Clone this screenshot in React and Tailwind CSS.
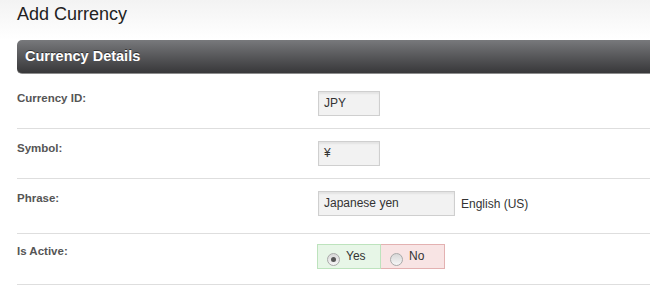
import React from 'react';

const Row = ({ label, children, className }) => (
  <div className={`flex border-b border-[#dedede] ${className}`}>
    <div className="w-[301px] shrink-0 text-[11.5px] font-bold leading-[14px] text-[#555]">
      {label}
    </div>
    <div className="flex items-center">{children}</div>
  </div>
);

const TextBox = ({ value, width }) => (
  <div
    className={`h-[25px] ${width} border border-[#cfcfcf] bg-[#f2f2f2] px-[5px] text-[12px] leading-[23px] text-[#333] shadow-[inset_0_2px_2px_rgba(0,0,0,0.06)]`}
  >
    {value}
  </div>
);

const Radio = ({ checked }) => (
  <span className="relative inline-block h-[13px] w-[13px] rounded-full border border-[#a9a9a9] bg-gradient-to-b from-[#d8d8d8] to-[#f6f6f6]">
    {checked && (
      <span className="absolute left-[3px] top-[3px] h-[5px] w-[5px] rounded-full bg-[#555]" />
    )}
  </span>
);

export default function App() {
  return (
    <div className="min-h-[294px] overflow-hidden bg-white font-['Liberation_Sans',Arial,sans-serif]">
      <div className="h-[40px] bg-gradient-to-b from-[#f3f3f3] to-white pl-[17px] pt-[3px]">
        <h1 className="text-[18px] leading-[22px] text-[#222]">Add Currency</h1>
      </div>

      <div className="pl-[17px]">
        <div className="h-[34px] rounded-l-[5px] border-b border-[#8c8c8c] bg-gradient-to-b from-[#78797c] to-[#38383a] pl-[8px] text-[14.5px] font-bold leading-[33px] text-white [text-shadow:0_-1px_0_rgba(0,0,0,0.5)]">
          Currency Details
        </div>

        <Row label="Currency ID:" className="pt-[17px] pb-[12px]">
          <TextBox value="JPY" width="w-[62px]" />
        </Row>

        <Row label="Symbol:" className="pt-[12px] pb-[12px]">
          <TextBox value="¥" width="w-[62px]" />
        </Row>

        <Row label="Phrase:" className="pt-[12px] pb-[17px]">
          <TextBox value="Japanese yen" width="w-[137px]" />
          <span className="ml-[6px] text-[12px] text-[#333]">English (US)</span>
        </Row>

        <Row label="Is Active:" className="pt-[10px] pb-[15px]">
          <div className="-ml-[1px] flex h-[25px]">
            <label className="flex w-[64px] items-start gap-[6px] border border-[#bde3bd] bg-[#e7f6e7] pl-[9px] pt-[4px] text-[12px] leading-[14px] text-[#333]">
              <span className="mt-[4px]"><Radio checked /></span>
              Yes
            </label>
            <label className="flex w-[64px] items-start gap-[6px] border border-l-0 border-[#e3b1b1] bg-[#f8e4e4] pl-[9px] pt-[4px] text-[12px] leading-[14px] text-[#333]">
              <span className="mt-[4px]"><Radio /></span>
              No
            </label>
          </div>
        </Row>
      </div>
    </div>
  );
}
